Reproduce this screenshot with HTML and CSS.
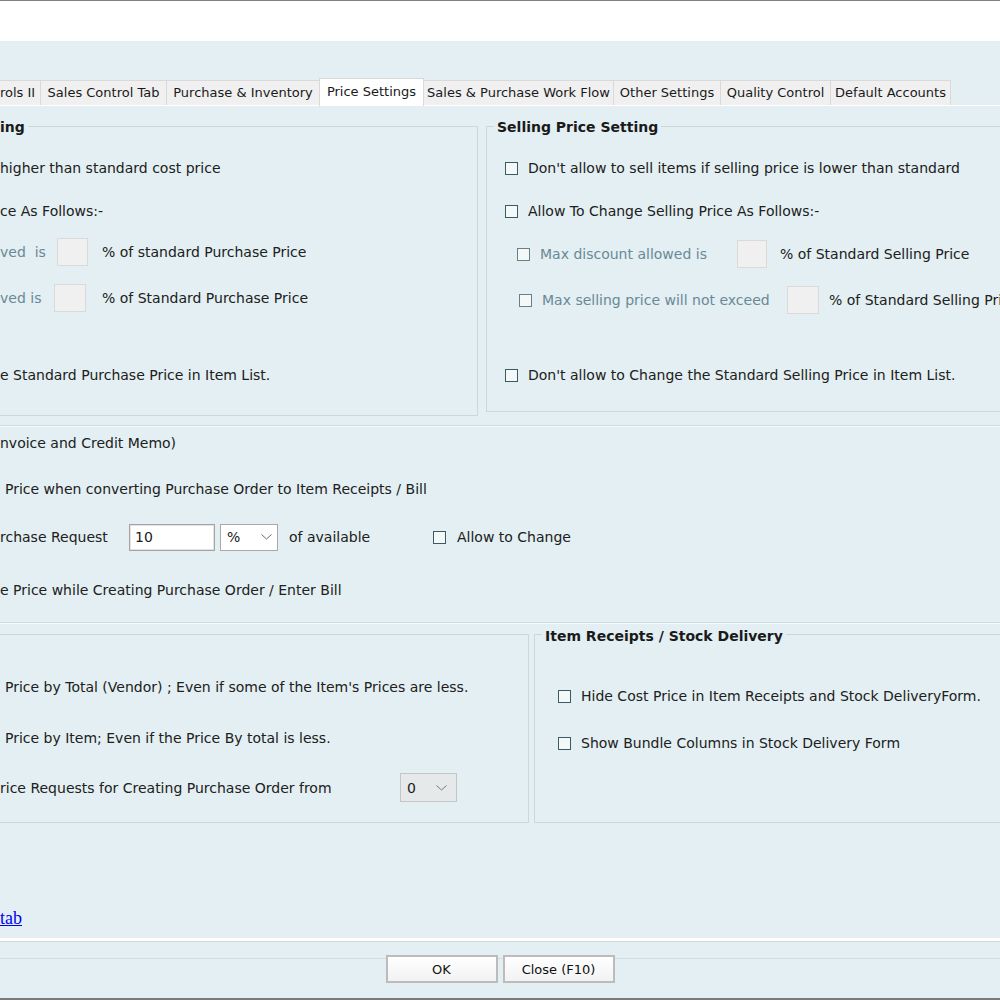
FILE: index.html
```html
<!DOCTYPE html>
<html>
<head>
<meta charset="utf-8">
<title>Price Settings</title>
<link rel="stylesheet" href="styles.css">
</head>
<body>
<div class="titlebar"></div>

<div class="tabstrip">
  <div class="tab t1">rols II</div>
  <div class="tab t2">Sales Control Tab</div>
  <div class="tab t3">Purchase &amp; Inventory</div>
  <div class="tab t4 sel">Price Settings</div>
  <div class="tab t5">Sales &amp; Purchase Work Flow</div>
  <div class="tab t6">Other Settings</div>
  <div class="tab t7">Quality Control</div>
  <div class="tab t8">Default Accounts</div>
</div>

<div class="panel">
  <div class="groups top">
    <div class="group gp">
      <div class="gtitle">ing</div>
      <div class="rows">
        <div class="row">higher than standard cost price</div>
        <div class="row">ce As Follows:-</div>
        <div class="row"><span class="dis la">ved&nbsp; is</span><span class="box ba"></span><span class="pa">% of standard Purchase Price</span></div>
        <div class="row"><span class="dis lb">ved is</span><span class="box bb"></span><span class="pb">% of Standard Purchase Price</span></div>
        <div class="row">e Standard Purchase Price in Item List.</div>
      </div>
    </div>
    <div class="group gs">
      <div class="gtitle">Selling Price Setting</div>
      <div class="rows">
        <div class="row"><span class="cb"></span>Don't allow to sell items if selling price is lower than standard</div>
        <div class="row"><span class="cb"></span>Allow To Change Selling Price As Follows:-</div>
        <div class="row s1"><span class="cb dcb"></span><span class="dis lc">Max discount allowed is</span><span class="box bc"></span><span class="pc">% of Standard Selling Price</span></div>
        <div class="row s2"><span class="cb dcb"></span><span class="dis ld">Max selling price will not exceed</span><span class="box bd"></span><span class="pd">% of Standard Selling Price</span></div>
        <div class="row"><span class="cb"></span>Don't allow to Change the Standard Selling Price in Item List.</div>
      </div>
    </div>
  </div>

  <div class="sep"></div>

  <div class="middle">
    <div class="mrow m1">nvoice and Credit Memo)</div>
    <div class="mrow m2">Price when converting Purchase Order to Item Receipts / Bill</div>
    <div class="mrow m3">
      <span class="lreq">rchase Request</span>
      <span class="tinput">10</span>
      <span class="select pct-sel"><span>%</span><svg width="11" height="6" viewBox="0 0 11 6"><path d="M0.5 0.5 L5.5 5 L10.5 0.5" fill="none" stroke="#6a6a6a" stroke-width="1"/></svg></span>
      <span class="avail">of available</span>
      <span class="cb"></span><span>Allow to Change</span>
    </div>
    <div class="mrow m4">e Price while Creating Purchase Order / Enter Bill</div>
  </div>

  <div class="sep sep2"></div>

  <div class="groups bottom">
    <div class="group gl">
      <div class="rows">
        <div class="row">Price by Total (Vendor) ; Even if some of the Item's Prices are less.</div>
        <div class="row">Price by Item; Even if the Price By total is less.</div>
        <div class="row"><span class="lfrom">rice Requests for Creating Purchase Order from</span><span class="select zero-sel"><span>0</span><svg width="11" height="6" viewBox="0 0 11 6"><path d="M0.5 0.5 L5.5 5 L10.5 0.5" fill="none" stroke="#7a7a7a" stroke-width="1"/></svg></span></div>
      </div>
    </div>
    <div class="group gr">
      <div class="gtitle">Item Receipts / Stock Delivery</div>
      <div class="rows">
        <div class="row"><span class="cb"></span>Hide Cost Price in Item Receipts and Stock DeliveryForm.</div>
        <div class="row"><span class="cb"></span>Show Bundle Columns in Stock Delivery Form</div>
      </div>
    </div>
  </div>

  <div class="linkrow"><a href="#" class="tablink">tab</a></div>
</div>

<div class="footer">
  <div class="footer-line"></div>
  <div class="buttons">
    <button class="btn">OK</button>
    <button class="btn">Close (F10)</button>
  </div>
</div>
</body>
</html>
```

FILE: styles.css
```css
* { box-sizing: border-box; }

html, body { margin: 0; padding: 0; }

body {
  width: 1000px;
  height: 1000px;
  overflow: hidden;
  background: #e3eff2;
  border-top: 1px solid #808080;
  border-bottom: 2px solid #7a7a7a;
  font-family: "DejaVu Sans", "Liberation Sans", sans-serif;
  font-size: 14px;
  color: #202020;
}

.titlebar { height: 40px; background: #ffffff; }

/* tabs */
.tabstrip {
  display: flex;
  align-items: flex-end;
  height: 27px;
  margin-top: 37px;
  white-space: nowrap;
}
.tab {
  flex: none;
  height: 25px;
  margin-left: -1px;
  background: #f0f0f0;
  border: 1px solid #d9d9d9;
  border-bottom: none;
  font-size: 13px;
  line-height: 23px;
  text-align: center;
  color: #1a1a1a;
  overflow: hidden;
}
.tab.t1 { margin-left: 0; border-left: none; width: 41px; text-align: left; }
.t2 { width: 127px; }
.t3 { width: 154px; }
.t4 { width: 105px; }
.t5 { width: 191px; }
.t6 { width: 108px; }
.t7 { width: 111px; }
.t8 { width: 121px; }
.tab.sel {
  position: relative;
  height: 28px;
  margin-bottom: -1px;
  background: #ffffff;
  line-height: 25px;
}

/* panel */
.panel {
  border-top: 1px solid #ffffff;
  border-bottom: 3px solid #ffffff;
  padding-top: 20px;
}

.groups { display: flex; align-items: flex-start; }

.group {
  flex: none;
  border: 1px solid #ccd7da;
}
.gtitle {
  width: fit-content;
  margin: -8px 0 0 7px;
  padding: 0 3px;
  height: 17px;
  line-height: 17px;
  background: #e3eff2;
  font-weight: bold;
  color: #1a1a1a;
}

.rows { display: flex; flex-direction: column; }
.row {
  display: flex;
  align-items: center;
  height: 28px;
  white-space: nowrap;
}

.cb {
  flex: none;
  width: 13px;
  height: 13px;
  margin-right: 10px;
  border: 1px solid #3b5a63;
  background: #f3f8f9;
}
.cb.dcb { border-color: #6c7e84; }

.dis { color: #6a8997; }

.box {
  flex: none;
  height: 28px;
  background: #f0f0f0;
  border: 1px solid #dadada;
}

/* upper-left group */
.gp { margin-left: -14px; width: 492px; height: 290px; }
.gp .gtitle { margin-left: 10px; }
.gp .rows { padding: 18px 0 0 13px; }
.gp .row:nth-child(2) { margin-top: 15px; }
.gp .row:nth-child(3) { margin-top: 13px; }
.gp .row:nth-child(4) { margin-top: 18px; }
.gp .row:nth-child(5) { margin-top: 49px; }
.la { width: 57px; }
.ba { width: 31px; }
.pa { margin-left: 14px; }
.lb { width: 54px; }
.bb { width: 32px; }
.pb { margin-left: 16px; }

/* upper-right group */
.gs { margin-left: 8px; width: 560px; height: 286px; }
.gs .rows { padding: 18px 0 0 18px; }
.gs .row:nth-child(2) { margin-top: 15px; }
.gs .row:nth-child(3) { margin-top: 15px; }
.gs .row:nth-child(4) { margin-top: 18px; }
.gs .row:nth-child(5) { margin-top: 47px; }
.s1 { padding-left: 12px; }
.s2 { padding-left: 14px; }
.lc { width: 197px; }
.bc { width: 30px; }
.pc { margin-left: 13px; }
.ld { width: 245px; }
.bd { width: 32px; }
.pd { margin-left: 10px; }

/* separators */
.sep {
  margin-top: 9px;
  height: 2px;
  border-top: 1px solid #d1dadd;
  border-bottom: 1px solid #f4f9fa;
}
.sep2 { margin-top: 18px; }

/* middle */
.middle { display: flex; flex-direction: column; }
.mrow {
  display: flex;
  align-items: center;
  height: 28px;
  white-space: nowrap;
}
.m1 { margin-top: 2px; }
.m2 { margin-top: 18px; padding-left: 5px; }
.m3 { margin-top: 20px; }
.m4 { margin-top: 25px; }

.lreq { width: 129px; }
.tinput {
  flex: none;
  width: 86px;
  height: 27px;
  line-height: 25px;
  padding-left: 5px;
  background: #ffffff;
  border: 1px solid #a4a4a4;
  box-shadow: inset 0 0 0 1px #e2e2e2;
}
.select {
  flex: none;
  display: flex;
  align-items: center;
  justify-content: space-between;
}
.pct-sel {
  width: 58px;
  height: 27px;
  margin-left: 5px;
  padding: 0 5px 0 6px;
  background: #ffffff;
  border: 1px solid #a9a9a9;
}
.avail { width: 144px; margin-left: 11px; }
.m3 .cb { margin-right: 11px; }

/* lower groups */
.bottom { margin-top: 10px; }
.gl { margin-left: -14px; width: 543px; height: 189px; }
.gl .rows { padding: 38px 0 0 13px; }
.gl .row:nth-child(1),
.gl .row:nth-child(2) { padding-left: 5px; }
.gl .row:nth-child(2) { margin-top: 23px; }
.gl .row:nth-child(3) { margin-top: 21px; height: 29px; }
.lfrom { width: 400px; }
.zero-sel {
  width: 57px;
  height: 29px;
  padding: 0 9px 0 6px;
  background: #e6e9e9;
  border: 1px solid #c3c6c6;
}

.gr { margin-left: 5px; width: 520px; height: 189px; }
.gr .gtitle { margin: -7px 0 0 7px; }
.gr .rows { padding: 37px 0 0 23px; }
.gr .row:nth-child(2) { margin-top: 19px; }

/* link */
.linkrow {
  margin-top: 85px;
  height: 20px;
  margin-bottom: 10px;
  line-height: 20px;
}
.tablink {
  font-family: "Liberation Serif", serif;
  font-size: 18px;
  color: #0000ee;
  text-decoration: underline;
}

/* footer */
.footer { border-top: 1px solid #d3d9db; }
.footer-line { margin-top: 16px; border-top: 1px solid #d5dcde; }
.buttons {
  display: flex;
  justify-content: center;
  gap: 5px;
  margin-top: -4px;
}
.btn {
  width: 112px;
  height: 28px;
  padding: 0;
  border: 2px solid #bcbcbc;
  background: linear-gradient(#ffffff, #f2f2f2);
  font-family: "DejaVu Sans", "Liberation Sans", sans-serif;
  font-size: 13px;
  color: #111111;
}
```
